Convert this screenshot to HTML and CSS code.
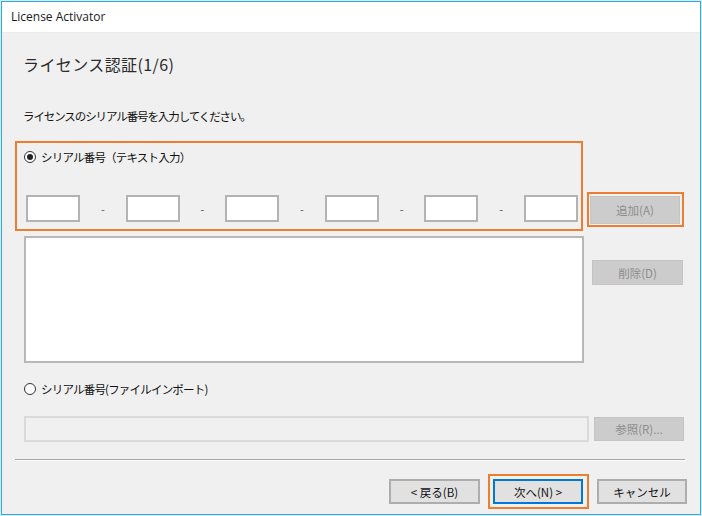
FILE: index.html
```html
<!DOCTYPE html>
<html lang="ja">
<head>
<meta charset="utf-8">
<title>License Activator</title>
<link rel="stylesheet" href="styles.css">
</head>
<body>
<div class="window">
  <div class="titlebar">License Activator</div>
  <div class="content">
    <div class="heading">ライセンス認証(1/6)</div>
    <div class="instruction">ライセンスのシリアル番号を入力してください。</div>

    <div class="row row-a">
      <div class="hl serial-box">
        <label class="radio-row">
          <span class="radio checked"></span>
          <span class="radio-label">シリアル番号（テキスト入力）</span>
        </label>
        <div class="serial-inputs">
          <span class="field"></span><span class="dash">-</span>
          <span class="field"></span><span class="dash">-</span>
          <span class="field"></span><span class="dash">-</span>
          <span class="field"></span><span class="dash">-</span>
          <span class="field"></span><span class="dash">-</span>
          <span class="field"></span>
        </div>
      </div>
      <div class="hl add-wrap">
        <span class="btn disabled add-btn">追加(A)</span>
      </div>
    </div>

    <div class="row row-b">
      <div class="listbox"></div>
      <span class="btn disabled del-btn">削除(D)</span>
    </div>

    <label class="radio-row radio2">
      <span class="radio"></span>
      <span class="radio-label">シリアル番号(ファイルインポート)</span>
    </label>

    <div class="row row-d">
      <div class="file-input"></div>
      <span class="btn disabled browse-btn">参照(R)...</span>
    </div>

    <div class="separator"></div>

    <div class="row footer">
      <span class="btn back-btn">&lt;&nbsp;戻る(B)</span>
      <div class="hl next-wrap">
        <span class="btn primary next-btn">次へ(N)&nbsp;&gt;</span>
      </div>
      <span class="btn cancel-btn">キャンセル</span>
    </div>
  </div>
</div>
</body>
</html>
```

FILE: styles.css
```css
* { box-sizing: border-box; }

html, body {
  margin: 0;
  padding: 0;
}

body {
  background: #d6edf9;
  padding: 1px 0 0 1px;
  width: 702px;
  height: 516px;
  overflow: hidden;
  font-family: "Noto Sans CJK JP", "Noto Sans", sans-serif;
  color: #111;
}

.window {
  width: 700px;
  height: 514px;
  border: 1px solid #2eaae6;
  background: #f0f0f0;
  display: flex;
  flex-direction: column;
}

.titlebar {
  height: 31px;
  background: #ffffff;
  padding-left: 9px;
  font-family: "Open Sans", "Noto Sans", sans-serif;
  font-size: 12px;
  line-height: 29px;
  color: #1a1a1a;
  border-bottom: 1px solid #ececec;
}

.content {
  flex: 1;
  padding: 0 13px;
  display: flex;
  flex-direction: column;
}

.heading {
  margin-top: 21px;
  padding-left: 8px;
  font-size: 16px;
  line-height: 20px;
  color: #2b2b2b;
  letter-spacing: 0.4px;
}

.instruction {
  margin-top: 34px;
  padding-left: 8px;
  font-size: 11.5px;
  line-height: 16px;
  letter-spacing: -1.1px;
}

.row {
  display: flex;
}

.hl {
  border: 2px solid #ed7d31;
}

/* Row A */
.row-a {
  margin-top: 17px;
  align-items: flex-end;
}

.serial-box {
  width: 568px;
  height: 90px;
  padding: 6px 0 0 7px;
}

.radio-row {
  display: flex;
  align-items: center;
  height: 16px;
}

.radio {
  width: 12px;
  height: 12px;
  border: 1px solid #333;
  border-radius: 50%;
  background: #fff;
  display: flex;
  align-items: center;
  justify-content: center;
}

.radio.checked::after {
  content: "";
  width: 6px;
  height: 6px;
  border-radius: 50%;
  background: #222;
}

.radio-label {
  margin-left: 5px;
  font-size: 11.5px;
  line-height: 16px;
  letter-spacing: -0.8px;
}

.serial-inputs {
  display: flex;
  align-items: center;
  margin-top: 30px;
  margin-left: 2px;
}

.field {
  width: 54px;
  height: 27px;
  background: #fff;
  border: 2px solid #b3b3b3;
}

.dash {
  width: 45.6px;
  text-align: center;
  font-size: 11px;
  color: #555;
}

.add-wrap {
  width: 97px;
  height: 35px;
  margin-left: 4px;
  margin-bottom: 4px;
  padding: 2px 2px 1px 1px;
}

.btn {
  display: flex;
  align-items: center;
  justify-content: center;
  font-size: 11.5px;
  background: #e1e1e1;
  border: 2px solid #adadad;
  color: #111;
}

.btn.disabled {
  background: #cccccc;
  border: 1px solid #c4c4c4;
  color: #8c8c8c;
}

.add-btn {
  width: 90px;
  height: 28px;
}

/* Row B */
.row-b {
  margin-top: 5px;
  align-items: flex-start;
}

.listbox {
  margin-left: 9px;
  width: 560px;
  height: 127px;
  background: #fff;
  border: 2px solid #b8b8b8;
}

.del-btn {
  margin-left: 8px;
  margin-top: 24px;
  width: 91px;
  height: 25px;
}

/* Radio 2 */
.radio2 {
  margin-top: 18px;
  padding-left: 9px;
}

/* Row D */
.row-d {
  margin-top: 19px;
  align-items: flex-start;
}

.file-input {
  margin-left: 9px;
  width: 565px;
  height: 26px;
  background: #f0f0f0;
  border: 2px solid #dadada;
}

.browse-btn {
  margin-left: 5px;
  margin-top: 1px;
  width: 90px;
  height: 24px;
}

.separator {
  margin-top: 17px;
  width: 670px;
  height: 2px;
  border-top: 1px solid #a8a8a8;
  border-bottom: 1px solid #fdfdfd;
}

/* Footer */
.footer {
  margin-top: 13px;
  justify-content: flex-end;
  align-items: center;
}

.back-btn {
  width: 91px;
  height: 25px;
}

.next-wrap {
  margin-left: 8px;
  width: 101px;
  height: 35px;
  padding: 3px 4px 3px 3px;
}

.next-btn {
  width: 90px;
  height: 25px;
}

.btn.primary {
  border: 2px solid #0078d7;
}

.cancel-btn {
  margin-left: 8px;
  width: 90px;
  height: 25px;
}
```
